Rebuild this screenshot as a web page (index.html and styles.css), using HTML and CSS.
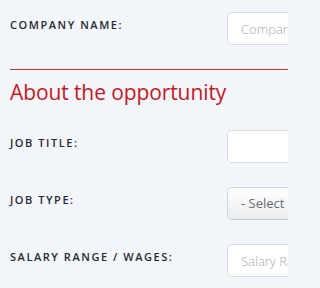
FILE: index.html
```html
<!DOCTYPE html>
<html>
<head>
<meta charset="utf-8">
<link rel="stylesheet" href="styles.css">
</head>
<body>
<div class="page">
  <div class="row first">
    <label class="label">COMPANY NAME:</label>
    <div class="field"><input class="input" type="text" placeholder="Company Name"></div>
  </div>
  <div class="divider"></div>
  <h2 class="heading">About the opportunity</h2>
  <div class="row">
    <label class="label">JOB TITLE:</label>
    <div class="field"><input class="input" type="text"></div>
  </div>
  <div class="row">
    <label class="label">JOB TYPE:</label>
    <div class="field"><div class="select">- Select -</div></div>
  </div>
  <div class="row">
    <label class="label">SALARY RANGE / WAGES:</label>
    <div class="field"><input class="input" type="text" placeholder="Salary Range"></div>
  </div>
</div>
</body>
</html>
```
FILE: styles.css
```css
html, body {
  margin: 0;
  padding: 0;
  background: #f2f5f9;
  overflow: hidden;
}
.page {
  box-sizing: border-box;
  width: 288px;
  height: 288px;
  overflow: hidden;
  padding: 12px 0 0 10px;
  font-family: "Open Sans", "Liberation Sans", sans-serif;
}
.row {
  display: flex;
  align-items: flex-start;
  height: 33px;
  margin-bottom: 24px;
}
.row.first {
  margin-bottom: 0;
}
.label {
  width: 217px;
  flex: none;
  padding-top: 6px;
  font-size: 11px;
  line-height: 14px;
  font-weight: 600;
  letter-spacing: 1.55px;
  color: #262b33;
}
.field {
  flex: none;
  width: 220px;
}
.input, .select {
  box-sizing: border-box;
  display: block;
  width: 220px;
  height: 33px;
  margin: 0;
  padding: 0 13px;
  border: 1px solid #d9dde2;
  border-radius: 5px;
  background: #ffffff;
  font-family: "Open Sans", "Liberation Sans", sans-serif;
  font-size: 13px;
  font-weight: 300;
  color: #555;
  outline: none;
}
.input::placeholder {
  color: #a8abb0;
}
.select {
  line-height: 31px;
  padding-left: 13px;
  background: linear-gradient(#ffffff, #eaecee);
  border-color: #d3d6da;
  border-bottom-color: #c4c7cb;
  color: #6a6d72;
  font-weight: 400;
}
.divider {
  margin-top: 24px;
  height: 0;
  border-top: 1px solid #d9342f;
}
.heading {
  margin: 9px 0 25px 0;
  font-size: 21px;
  line-height: 26px;
  font-weight: 400;
  letter-spacing: -0.1px;
  color: #c8171d;
}
```
